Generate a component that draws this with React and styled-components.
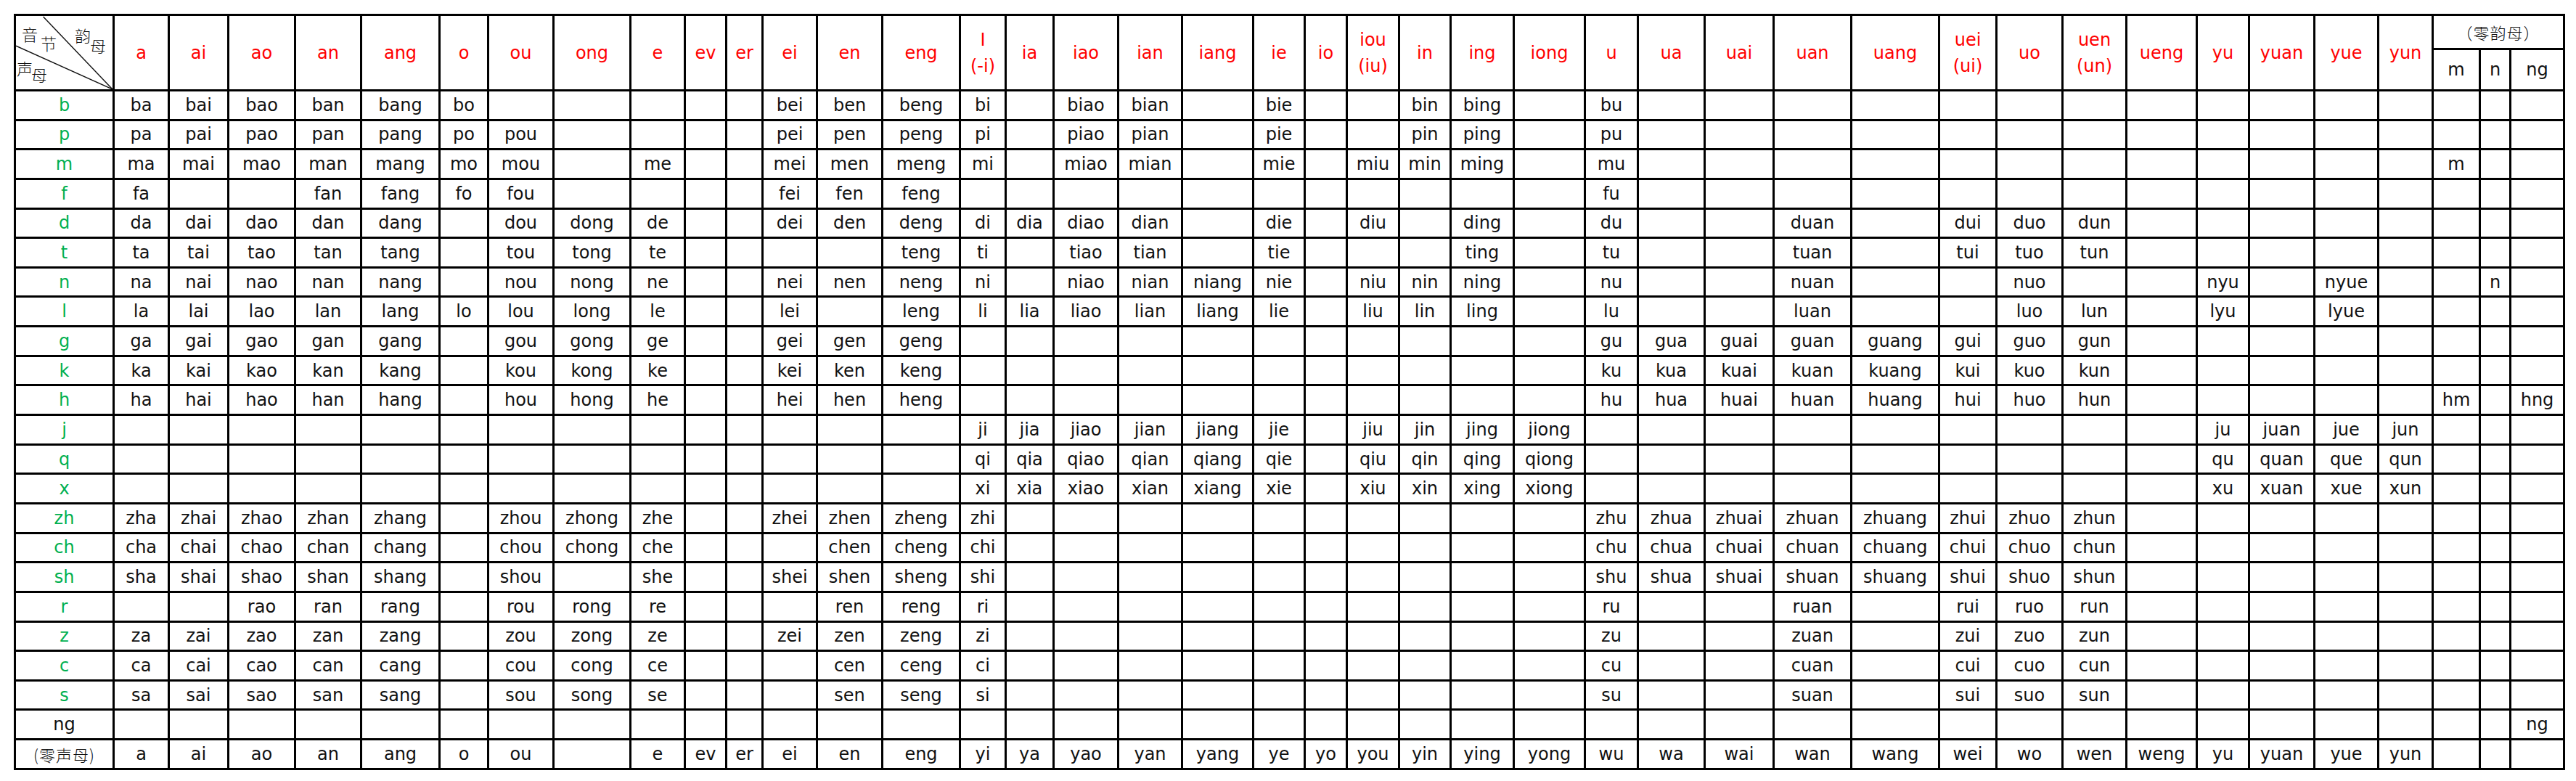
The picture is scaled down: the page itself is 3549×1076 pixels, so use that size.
import React from 'react';
import styled, { createGlobalStyle } from 'styled-components';

const GlobalStyle = createGlobalStyle`
  html, body {
    margin: 0;
    padding: 0;
    background: #fff;
  }
  body {
    font-family: "DejaVu Sans", "Noto Sans CJK SC", sans-serif;
  }
`;

// line positions measured from the chart, left edge of each column
const edges = [
  20, 156, 232, 314, 406, 497, 605, 672, 762, 868, 943, 1000, 1050, 1125, 1215,
  1322, 1385, 1451, 1540, 1628, 1726, 1797, 1855, 1927, 1998, 2085, 2183, 2256,
  2348, 2443, 2550, 2671, 2750, 2841, 2929, 3026, 3098, 3188, 3276, 3351, 3416,
  3458, 3532,
];
const LINE = 3;
const tracks = edges
  .slice(1)
  .map((e, i) => `${e - edges[i] - LINE}px`)
  .join(' ');

const finals = [
  { key: 'a', label: 'a' },
  { key: 'ai', label: 'ai' },
  { key: 'ao', label: 'ao' },
  { key: 'an', label: 'an' },
  { key: 'ang', label: 'ang' },
  { key: 'o', label: 'o' },
  { key: 'ou', label: 'ou' },
  { key: 'ong', label: 'ong' },
  { key: 'e', label: 'e' },
  { key: 'ev', label: 'ev' },
  { key: 'er', label: 'er' },
  { key: 'ei', label: 'ei' },
  { key: 'en', label: 'en' },
  { key: 'eng', label: 'eng' },
  { key: 'i', label: ['I', '(-i)'] },
  { key: 'ia', label: 'ia' },
  { key: 'iao', label: 'iao' },
  { key: 'ian', label: 'ian' },
  { key: 'iang', label: 'iang' },
  { key: 'ie', label: 'ie' },
  { key: 'io', label: 'io' },
  { key: 'iou', label: ['iou', '(iu)'] },
  { key: 'in', label: 'in' },
  { key: 'ing', label: 'ing' },
  { key: 'iong', label: 'iong' },
  { key: 'u', label: 'u' },
  { key: 'ua', label: 'ua' },
  { key: 'uai', label: 'uai' },
  { key: 'uan', label: 'uan' },
  { key: 'uang', label: 'uang' },
  { key: 'uei', label: ['uei', '(ui)'] },
  { key: 'uo', label: 'uo' },
  { key: 'uen', label: ['uen', '(un)'] },
  { key: 'ueng', label: 'ueng' },
  { key: 'yu', label: 'yu' },
  { key: 'yuan', label: 'yuan' },
  { key: 'yue', label: 'yue' },
  { key: 'yun', label: 'yun' },
];
const zeroFinals = ['m', 'n', 'ng'];
const columns = [...finals.map((f) => f.key), ...zeroFinals.map((z) => 'z' + z)];

const rows = [
  ['b', 'a:ba ai:bai ao:bao an:ban ang:bang o:bo ei:bei en:ben eng:beng i:bi iao:biao ian:bian ie:bie in:bin ing:bing u:bu'],
  ['p', 'a:pa ai:pai ao:pao an:pan ang:pang o:po ou:pou ei:pei en:pen eng:peng i:pi iao:piao ian:pian ie:pie in:pin ing:ping u:pu'],
  ['m', 'a:ma ai:mai ao:mao an:man ang:mang o:mo ou:mou e:me ei:mei en:men eng:meng i:mi iao:miao ian:mian ie:mie iou:miu in:min ing:ming u:mu zm:m'],
  ['f', 'a:fa an:fan ang:fang o:fo ou:fou ei:fei en:fen eng:feng u:fu'],
  ['d', 'a:da ai:dai ao:dao an:dan ang:dang ou:dou ong:dong e:de ei:dei en:den eng:deng i:di ia:dia iao:diao ian:dian ie:die iou:diu ing:ding u:du uan:duan uei:dui uo:duo uen:dun'],
  ['t', 'a:ta ai:tai ao:tao an:tan ang:tang ou:tou ong:tong e:te eng:teng i:ti iao:tiao ian:tian ie:tie ing:ting u:tu uan:tuan uei:tui uo:tuo uen:tun'],
  ['n', 'a:na ai:nai ao:nao an:nan ang:nang ou:nou ong:nong e:ne ei:nei en:nen eng:neng i:ni iao:niao ian:nian iang:niang ie:nie iou:niu in:nin ing:ning u:nu uan:nuan uo:nuo yu:nyu yue:nyue zn:n'],
  ['l', 'a:la ai:lai ao:lao an:lan ang:lang o:lo ou:lou ong:long e:le ei:lei eng:leng i:li ia:lia iao:liao ian:lian iang:liang ie:lie iou:liu in:lin ing:ling u:lu uan:luan uo:luo uen:lun yu:lyu yue:lyue'],
  ['g', 'a:ga ai:gai ao:gao an:gan ang:gang ou:gou ong:gong e:ge ei:gei en:gen eng:geng u:gu ua:gua uai:guai uan:guan uang:guang uei:gui uo:guo uen:gun'],
  ['k', 'a:ka ai:kai ao:kao an:kan ang:kang ou:kou ong:kong e:ke ei:kei en:ken eng:keng u:ku ua:kua uai:kuai uan:kuan uang:kuang uei:kui uo:kuo uen:kun'],
  ['h', 'a:ha ai:hai ao:hao an:han ang:hang ou:hou ong:hong e:he ei:hei en:hen eng:heng u:hu ua:hua uai:huai uan:huan uang:huang uei:hui uo:huo uen:hun zm:hm zng:hng'],
  ['j', 'i:ji ia:jia iao:jiao ian:jian iang:jiang ie:jie iou:jiu in:jin ing:jing iong:jiong yu:ju yuan:juan yue:jue yun:jun'],
  ['q', 'i:qi ia:qia iao:qiao ian:qian iang:qiang ie:qie iou:qiu in:qin ing:qing iong:qiong yu:qu yuan:quan yue:que yun:qun'],
  ['x', 'i:xi ia:xia iao:xiao ian:xian iang:xiang ie:xie iou:xiu in:xin ing:xing iong:xiong yu:xu yuan:xuan yue:xue yun:xun'],
  ['zh', 'a:zha ai:zhai ao:zhao an:zhan ang:zhang ou:zhou ong:zhong e:zhe ei:zhei en:zhen eng:zheng i:zhi u:zhu ua:zhua uai:zhuai uan:zhuan uang:zhuang uei:zhui uo:zhuo uen:zhun'],
  ['ch', 'a:cha ai:chai ao:chao an:chan ang:chang ou:chou ong:chong e:che en:chen eng:cheng i:chi u:chu ua:chua uai:chuai uan:chuan uang:chuang uei:chui uo:chuo uen:chun'],
  ['sh', 'a:sha ai:shai ao:shao an:shan ang:shang ou:shou e:she ei:shei en:shen eng:sheng i:shi u:shu ua:shua uai:shuai uan:shuan uang:shuang uei:shui uo:shuo uen:shun'],
  ['r', 'ao:rao an:ran ang:rang ou:rou ong:rong e:re en:ren eng:reng i:ri u:ru uan:ruan uei:rui uo:ruo uen:run'],
  ['z', 'a:za ai:zai ao:zao an:zan ang:zang ou:zou ong:zong e:ze ei:zei en:zen eng:zeng i:zi u:zu uan:zuan uei:zui uo:zuo uen:zun'],
  ['c', 'a:ca ai:cai ao:cao an:can ang:cang ou:cou ong:cong e:ce en:cen eng:ceng i:ci u:cu uan:cuan uei:cui uo:cuo uen:cun'],
  ['s', 'a:sa ai:sai ao:sao an:san ang:sang ou:sou ong:song e:se en:sen eng:seng i:si u:su uan:suan uei:sui uo:suo uen:sun'],
  ['ng', 'zng:ng', true],
  ['(零声母)', 'a:a ai:ai ao:ao an:an ang:ang o:o ou:ou e:e ev:ev er:er ei:ei en:en eng:eng i:yi ia:ya iao:yao ian:yan iang:yang ie:ye io:yo iou:you in:yin ing:ying iong:yong u:wu ua:wa uai:wai uan:wan uang:wang uei:wei uo:wo uen:wen ueng:weng yu:yu yuan:yuan yue:yue yun:yun', true],
];

const parse = (str) =>
  Object.fromEntries(str.split(' ').map((pair) => pair.split(':')));

const Page = styled.div`
  padding: 19px 0 0 19px;
`;

const Chart = styled.div`
  display: inline-grid;
  grid-template-columns: ${tracks};
  grid-template-rows: 44px 54px repeat(23, 37.65px);
  gap: ${LINE}px;
  padding: ${LINE}px;
  background: #000;
`;

const Cell = styled.div`
  background: #fff;
  display: flex;
  flex-direction: column;
  align-items: center;
  justify-content: center;
  font-size: 24px;
  line-height: 36px;
  color: ${(p) => p.$color || '#111'};
  grid-row: ${(p) => (p.$rows ? `span ${p.$rows}` : 'auto')};
  grid-column: ${(p) => (p.$cols ? `span ${p.$cols}` : 'auto')};
  white-space: nowrap;
`;

const CjkCell = styled(Cell)`
  font-family: "Noto Sans CJK SC", sans-serif;
  font-size: 22px;
  font-weight: 300;
  letter-spacing: 1px;
`;

const Corner = styled.div`
  grid-row: span 2;
  background: #fff;
  position: relative;
  font-family: "Noto Sans CJK SC", sans-serif;
  font-size: 22px;
  font-weight: 300;
  color: #111;
`;

const Slash = styled.svg`
  position: absolute;
  inset: 0;
  width: 100%;
  height: 100%;
`;

const Tag = styled.span`
  position: absolute;
  left: ${(p) => p.$x}px;
  top: ${(p) => p.$y}px;
  transform: translate(-50%, -50%);
  line-height: 1;
`;

const RED = '#ff0000';
const GREEN = '#00b050';

const cornerTags = [
  ['音', 19, 24],
  ['节', 45, 37],
  ['韵', 92, 26],
  ['母', 113, 40],
  ['声', 12, 71],
  ['母', 32, 80],
];

const App = () => (
  <Page>
    <GlobalStyle />
    <Chart>
      <Corner>
        <Slash viewBox="0 0 131 98" preserveAspectRatio="none">
          <line x1="37" y1="1" x2="131" y2="98" stroke="#111" strokeWidth="1.4" />
          <line x1="0" y1="40" x2="131" y2="98" stroke="#111" strokeWidth="1.4" />
        </Slash>
        {cornerTags.map(([t, x, y], i) => (
          <Tag key={i} $x={x} $y={y}>
            {t}
          </Tag>
        ))}
      </Corner>
      {finals.map((f) => (
        <Cell key={f.key} $rows={2} $color={RED}>
          {Array.isArray(f.label)
            ? f.label.map((l) => <span key={l}>{l}</span>)
            : f.label}
        </Cell>
      ))}
      <CjkCell $cols={3}>（零韵母）</CjkCell>
      {zeroFinals.map((z) => (
        <Cell key={z}>{z}</Cell>
      ))}
      {rows.map(([initial, str, plain]) => {
        const map = parse(str);
        return (
          <React.Fragment key={initial}>
            {initial.startsWith('(') ? (
              <CjkCell>{initial}</CjkCell>
            ) : (
              <Cell $color={plain ? '#111' : GREEN}>{initial}</Cell>
            )}
            {columns.map((c) => (
              <Cell key={c}>{map[c] || ''}</Cell>
            ))}
          </React.Fragment>
        );
      })}
    </Chart>
  </Page>
);

export default App;
